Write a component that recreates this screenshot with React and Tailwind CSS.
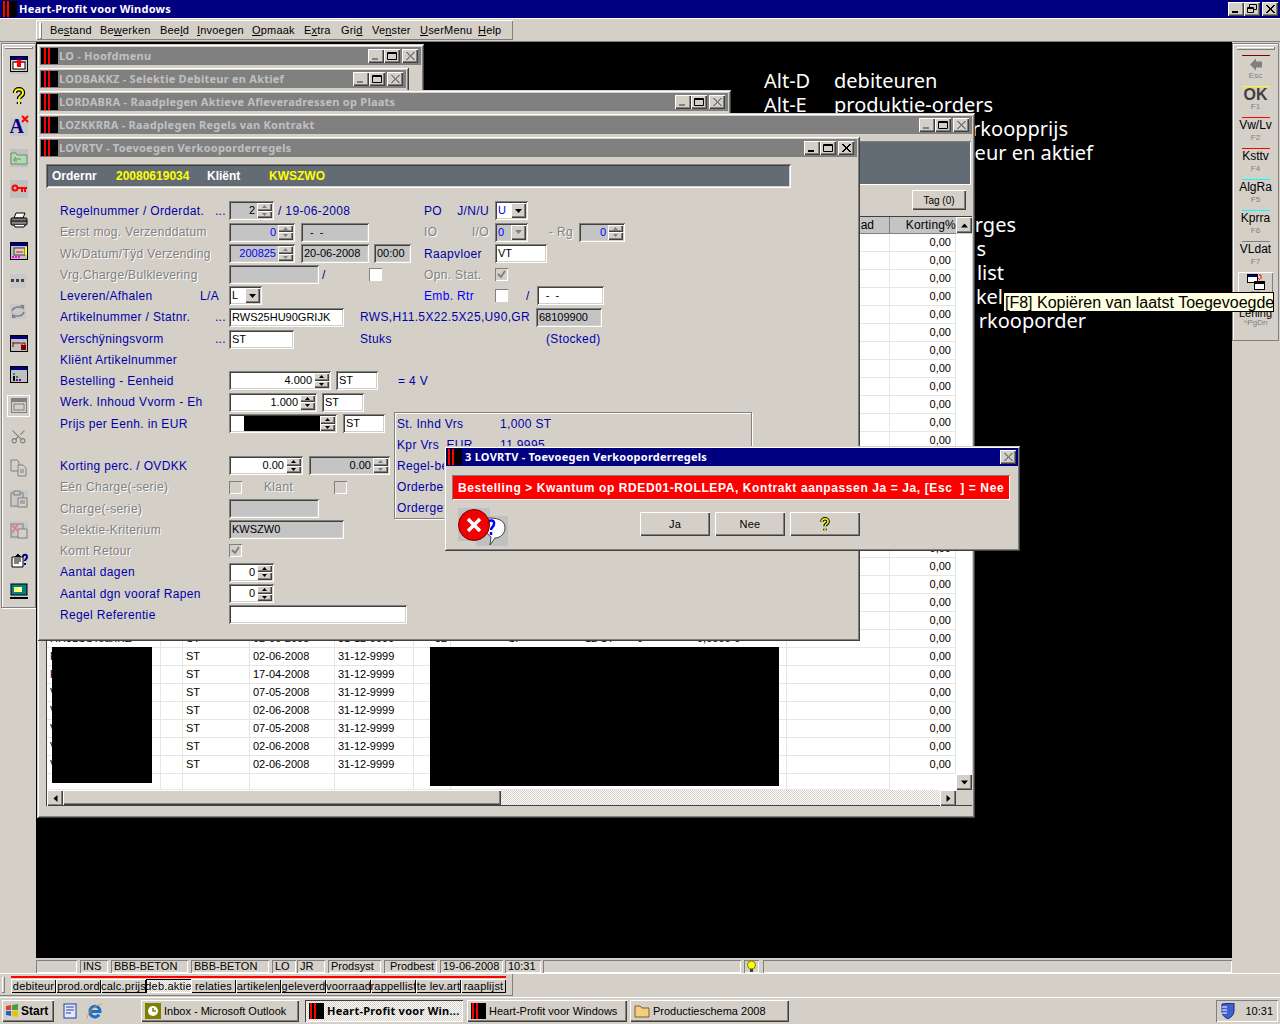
import { Scissors } from "lucide-react";
import clsx from "clsx";

const RAISED = "shadow-[inset_1px_1px_0_#fff,inset_-1px_-1px_0_#404040,inset_-2px_-2px_0_#808080]";
const SUNKEN = "shadow-[inset_1px_1px_0_#808080,inset_-1px_-1px_0_#fff,inset_2px_2px_0_#404040,inset_-2px_-2px_0_#d4d0c8]";
const THIN_IN = "shadow-[inset_1px_1px_0_#808080,inset_-1px_-1px_0_#fff]";
const WINDOW = "shadow-[inset_1px_1px_0_#d4d0c8,inset_-1px_-1px_0_#404040,inset_2px_2px_0_#fff,inset_-2px_-2px_0_#808080]";
const TITLE_FONT = "font-['Noto_Sans',sans-serif] font-bold tracking-[0.25px]";

function AppIcon({ small }) {
  return (
    <div className={clsx("flex shrink-0 gap-[2px] bg-black", small ? "h-[16px] w-[15px] pl-[1px]" : "h-[16px] w-[17px] pl-[3px]")}>
      <div className="h-full w-[2px] bg-[#ff0000]" />
      <div className="h-full w-[2px] bg-[#ff0000]" />
    </div>
  );
}

function CtlButton({ kind, disabled }) {
  const color = disabled ? "#808080" : "#000";
  return (
    <div className={clsx("flex h-[14px] w-[16px] shrink-0 items-center justify-center bg-[#d4d0c8]", RAISED)}>
      <svg width="12" height="10" viewBox="0 0 12 10">
        {kind === "min" && <rect x="2" y="7" width="6" height="2" fill={color} />}
        {kind === "max" && <path d="M1.5 1.5h9v7h-9zM1.5 2.5h9" stroke="#000" fill="none" />}
        {kind === "restore" && <path d="M3.5 3V.5h7v5H8M1.5 3.5h6v5h-6zM1.5 4.5h6" stroke="#000" fill="none" />}
        {kind === "close" && <path d="M2 1l8 8M3 1l8 8M10 1l-8 8M11 1l-8 8" stroke={color} />}
      </svg>
    </div>
  );
}

function MdiWindow({ title, className, closeActive, children }) {
  return (
    <div className={clsx("absolute flex flex-col bg-[#d4d0c8] p-[3px]", WINDOW, className)}>
      <div className="flex h-[18px] shrink-0 items-center bg-[#808080] pl-[1px] pr-[3px]">
        <AppIcon />
        <span className={clsx(TITLE_FONT, "ml-[1px] flex-1 whitespace-nowrap text-[11px] text-[#c0c0c0]")}>{title}</span>
        <CtlButton kind="min" disabled={!closeActive} />
        <CtlButton kind="max" />
        <div className="w-[2px]" />
        <CtlButton kind="close" disabled={!closeActive} />
      </div>
      {children}
    </div>
  );
}

function Lbl({ children, off, bright, className }) {
  return (
    <span
      className={clsx(
        "whitespace-nowrap text-[12px] tracking-[0.35px]",
        off ? "text-[#808080] [text-shadow:1px_1px_0_#fff]" : bright ? "text-[#0000ff]" : "text-[#0000a8]",
        className,
      )}
    >
      {children}
    </span>
  );
}

function Cap({ children, off, extra, right = "pr-[3px]" }) {
  return (
    <div className={clsx("flex w-[169px] shrink-0 items-center justify-between", right)}>
      <Lbl off={off}>{children}</Lbl>
      {extra && <Lbl>{extra}</Lbl>}
    </div>
  );
}

function Field({ w, off, children, className }) {
  return (
    <div
      className={clsx(
        "flex h-[19px] shrink-0 items-center overflow-hidden whitespace-nowrap pl-[3px] text-[11px] text-black",
        SUNKEN,
        off ? "bg-[#c4c4c4]" : "bg-white",
        w,
        className,
      )}
    >
      {children}
    </div>
  );
}

function Spin({ w, off, value, blue, className, block }) {
  const c = off ? "#808080" : "#000";
  return (
    <div className={clsx("relative flex h-[19px] shrink-0 items-center justify-end p-[2px] text-[11px]", SUNKEN, off ? "bg-[#c4c4c4]" : "bg-white", w, className)}>
      {block && <div className="absolute left-[15px] top-[2px] h-[15px] w-[76px] bg-black" />}
      <span className={clsx("pr-[2px]", blue ? "text-[#0000ff]" : "text-black")}>{value}</span>
      <div className="flex w-[15px] shrink-0 flex-col">
        {[0, 1].map((d) => (
          <div key={d} className={clsx("flex h-[7.5px] items-center justify-center bg-[#d4d0c8]", RAISED)}>
            <svg width="5" height="3" viewBox="0 0 5 3">
              <path d={d ? "M0 0h5L2.5 3z" : "M0 3h5L2.5 0z"} fill={c} />
            </svg>
          </div>
        ))}
      </div>
    </div>
  );
}

function Combo({ value, off }) {
  return (
    <div className={clsx("flex h-[19px] w-[33px] shrink-0 items-center justify-between p-[2px] pl-[3px] text-[11px]", SUNKEN, off ? "bg-[#c4c4c4]" : "bg-white")}>
      <span className={off || value === "U" ? "text-[#0000ff]" : "text-black"}>{value}</span>
      <div className={clsx("flex h-[15px] w-[15px] items-center justify-center bg-[#d4d0c8]", RAISED)}>
        <svg width="7" height="4" viewBox="0 0 7 4">
          <path d="M0 0h7L3.5 4z" fill={off ? "#808080" : "#000"} />
        </svg>
      </div>
    </div>
  );
}

function Check({ checked, off, className }) {
  return (
    <div className={clsx("flex h-[13px] w-[13px] shrink-0 items-center justify-center", THIN_IN, off ? "bg-[#d4d0c8]" : "bg-white", className)}>
      {checked && (
        <svg width="9" height="9" viewBox="0 0 9 9">
          <path d="M1 4l3 3 4-6" stroke="#808080" strokeWidth="2" fill="none" />
        </svg>
      )}
    </div>
  );
}

function FormRow({ h = "h-[21px]", children, className }) {
  return <div className={clsx("flex items-center", h, className)}>{children}</div>;
}

function Split({ left, right, h }) {
  return (
    <FormRow h={h}>
      <div className="flex w-[364px] shrink-0 items-center">{left}</div>
      <div className="flex items-center">{right}</div>
    </FormRow>
  );
}

function RightCap({ children, off, bright, second, secondOff }) {
  return (
    <div className="flex w-[71px] shrink-0 items-center justify-between pr-[10px]">
      <Lbl off={off} bright={bright}>{children}</Lbl>
      {second && <Lbl off={secondOff} className="-mr-[4px]">{second}</Lbl>}
    </div>
  );
}

function OrderForm() {
  return (
    <div className="flex flex-col pl-[20px] pt-[12px]">
      <Split
        left={
          <>
            <Cap extra="...">Regelnummer / Orderdat.</Cap>
            <Spin w="w-[45px]" off value="2" />
            <Lbl className="ml-[4px]">/ 19-06-2008</Lbl>
          </>
        }
        right={
          <>
            <RightCap second="J/N/U">PO</RightCap>
            <Combo value="U" />
          </>
        }
      />
      <Split
        h="h-[22px]"
        left={
          <>
            <Cap off>Eerst mog. Verzenddatum</Cap>
            <Spin w="w-[66px]" off blue value="0" />
            <Field off w="w-[68px]" className="ml-[6px] pl-[9px] text-[#0000a8]">-&nbsp;&nbsp;-</Field>
          </>
        }
        right={
          <>
            <RightCap off second="I/O" secondOff>IO</RightCap>
            <Combo value="0" off />
            <Lbl off className="ml-[21px]">- Rg</Lbl>
            <Spin w="w-[46px]" off blue value="0" className="ml-[6px]" />
          </>
        }
      />
      <Split
        left={
          <>
            <Cap off>Wk/Datum/Tÿd Verzending</Cap>
            <Spin w="w-[66px]" off blue value="200825" />
            <Field off w="w-[68px]" className="ml-[6px] text-[#0000ff]">20-06-2008</Field>
            <Field off w="w-[37px]" className="ml-[5px] text-[#0000ff]">00:00</Field>
          </>
        }
        right={
          <>
            <RightCap>Raapvloer</RightCap>
            <Field w="w-[52px]">VT</Field>
          </>
        }
      />
      <Split
        left={
          <>
            <Cap off>Vrg.Charge/Bulklevering</Cap>
            <Field off w="w-[90px]" />
            <Lbl className="ml-[3px]">/</Lbl>
            <Check className="ml-[43px]" />
          </>
        }
        right={
          <>
            <RightCap off>Opn. Stat.</RightCap>
            <Check checked off />
          </>
        }
      />
      <Split
        left={
          <>
            <Cap extra="L/A" right="pr-[10px]">Leveren/Afhalen</Cap>
            <Combo value="L" />
          </>
        }
        right={
          <>
            <RightCap bright>Emb. Rtr</RightCap>
            <Check />
            <Lbl className="ml-[18px]">/</Lbl>
            <Field w="w-[67px]" className="ml-[7px] pl-[9px]">-&nbsp;&nbsp;-</Field>
          </>
        }
      />
      <FormRow h="h-[22px]">
        <Cap extra="...">Artikelnummer / Statnr.</Cap>
        <Field w="w-[115px]">RWS25HU90GRIJK</Field>
        <Lbl className="ml-[16px] w-[176px]">RWS,H11.5X22.5X25,U90,GR</Lbl>
        <Field off w="w-[66px]">68109900</Field>
      </FormRow>
      <FormRow h="h-[22px]">
        <Cap extra="...">Verschÿningsvorm</Cap>
        <Field w="w-[65px]">ST</Field>
        <Lbl className="ml-[66px] w-[186px]">Stuks</Lbl>
        <Lbl>(Stocked)</Lbl>
      </FormRow>
      <FormRow h="h-[20px]">
        <Cap>Kliënt Artikelnummer</Cap>
      </FormRow>
      <FormRow>
        <Cap>Bestelling - Eenheid</Cap>
        <Spin w="w-[102px]" value="4.000" />
        <Field w="w-[42px]" className="ml-[5px]">ST</Field>
        <Lbl className="ml-[20px]">= 4 V</Lbl>
      </FormRow>
      <FormRow h="h-[22px]">
        <Cap>Werk. Inhoud Vvorm - Eh</Cap>
        <Spin w="w-[88px]" value="1.000" />
        <Field w="w-[42px]" className="ml-[5px]">ST</Field>
      </FormRow>
      <div className="flex">
        <div className="flex w-[334px] shrink-0 flex-col">
          <FormRow>
            <Cap>Prijs per Eenh. in EUR</Cap>
            <Spin w="w-[108px]" value="" block />
            <Field w="w-[42px]" className="ml-[6px]">ST</Field>
          </FormRow>
          <div className="h-[21px]" />
          <FormRow>
            <Cap>Korting perc. / OVDKK</Cap>
            <Spin w="w-[74px]" value="0.00" />
            <Spin w="w-[81px]" off value="0.00" className="ml-[6px]" />
          </FormRow>
          <FormRow h="h-[22px]">
            <Cap off>Eén Charge(-serie)</Cap>
            <Check off />
            <Lbl off className="ml-[22px] w-[70px]">Klant</Lbl>
            <Check off />
          </FormRow>
          <FormRow>
            <Cap off>Charge(-serie)</Cap>
            <Field off w="w-[90px]" />
          </FormRow>
          <FormRow>
            <Cap off>Selektie-Kriterium</Cap>
            <Field off w="w-[115px]" className="text-[#0000ff]">KWSZW0</Field>
          </FormRow>
          <FormRow>
            <Cap off>Komt Retour</Cap>
            <Check checked off />
          </FormRow>
          <FormRow h="h-[22px]">
            <Cap>Aantal dagen</Cap>
            <Spin w="w-[45px]" value="0" />
          </FormRow>
          <FormRow>
            <Cap>Aantal dgn vooraf Rapen</Cap>
            <Spin w="w-[45px]" value="0" />
          </FormRow>
          <FormRow>
            <Cap>Regel Referentie</Cap>
            <Field w="w-[178px]" />
          </FormRow>
        </div>
        <div className="mt-[-1px] flex h-[107px] w-[358px] flex-col border border-[#808080] pl-[2px] pt-[1px] shadow-[1px_1px_0_#fff,inset_1px_1px_0_#fff]">
          {[
            ["St. Inhd Vrs", "1,000 ST"],
            ["Kpr Vrs  EUR", "11,9995"],
            ["Regel-bedrag", ""],
            ["Orderbedrag", ""],
            ["Ordergewicht", ""],
          ].map(([a, b]) => (
            <div key={a} className="flex h-[21px] items-center">
              <Lbl className="w-[103px] whitespace-pre">{a}</Lbl>
              <Lbl>{b}</Lbl>
            </div>
          ))}
        </div>
      </div>
    </div>
  );
}

const GRID = "grid grid-cols-[114px_22px_67px_85px_79px_37px_336px_103px_66px]";

const DATA_ROWS = {
  23: ["F", "02-06-2008"],
  24: ["F", "17-04-2008"],
  25: ["V", "07-05-2008"],
  26: ["V", "02-06-2008"],
  27: ["V", "07-05-2008"],
  28: ["V", "02-06-2008"],
  29: ["V", "02-06-2008"],
};

function ContractTable() {
  const rows = Array.from({ length: 30 }, (_, i) => i);
  return (
    <div className="relative ml-[6px] mt-[6px] flex w-[926px] flex-col border-l border-t border-[#404040] text-[11px] text-black">
      <div className="flex">
        <div className={clsx(GRID, "h-[17px] bg-[#c4c4c4]")}>
          {["", "", "", "", "", "", ""].map((t, i) => (
            <div key={i} className="border-r border-b border-[#808080]" />
          ))}
          <div className="border-r border-b border-[#808080] pr-[15px] text-right text-[12px] leading-[16px]">ad</div>
          <div className="border-b border-[#808080] text-right text-[12px] leading-[16px] tracking-[0.2px]">Korting%</div>
        </div>
        <ScrollBtn dir="up" />
      </div>
      <div className="flex">
        <div className="flex w-[909px] flex-col bg-white">
          {rows.map((i) => {
            const d = DATA_ROWS[i];
            return (
              <div key={i} className={clsx(GRID, "h-[18px] shrink-0 leading-[17px]")}>
                <Cell className="pl-[3px]">{i === 22 ? "HH3LSSToarIKE" : d?.[0]}</Cell>
                <Cell />
                <Cell className="pl-[3px]">{d || i === 22 ? "ST" : ""}</Cell>
                <Cell className="pl-[3px]">{i === 22 ? "02-06-2008" : d?.[1]}</Cell>
                <Cell className="pl-[3px]">{d || i === 22 ? "31-12-9999" : ""}</Cell>
                <Cell className="pl-[21px]">{i === 22 ? "32" : ""}</Cell>
                <Cell className="flex">
                  {i === 22 && (
                    <>
                      <span className="ml-[57px] w-[77px]">SI</span>
                      <span className="w-[15px]">12</span>
                      <span className="w-[37px]">ST</span>
                      <span className="w-[60px]">0</span>
                      <span>0,0000-0</span>
                    </>
                  )}
                </Cell>
                <Cell />
                <Cell className="pr-[4px] text-right">0,00</Cell>
              </div>
            );
          })}
          <div className={clsx(GRID, "h-[16px]")}>
            {[0, 1, 2, 3, 4, 5, 6, 7].map((i) => <Cell key={i} />)}
            <div />
          </div>
        </div>
        <div className="flex w-[16px] flex-col justify-end bg-white">
          <ScrollBtn dir="down" />
        </div>
      </div>
      <div className="flex h-[16px] border-b border-[#404040]">
        <ScrollBtn dir="left" />
        <div className={clsx("h-[15px] w-[438px] bg-[#d4d0c8]", RAISED)} />
        <div className="w-[439px] bg-[repeating-conic-gradient(#d4d0c8_0_25%,#fff_0_50%)] bg-[length:2px_2px]" />
        <ScrollBtn dir="right" />
      </div>
      <div className="absolute left-[5px] top-[430px] h-[136px] w-[100px] bg-black" />
      <div className="absolute left-[383px] top-[430px] h-[139px] w-[349px] bg-black" />
    </div>
  );
}

function Cell({ children, className }) {
  return <div className={clsx("overflow-hidden whitespace-nowrap border-b border-r border-[#e6e6e6]", className)}>{children}</div>;
}

function ScrollBtn({ dir }) {
  const d = { up: "M0 4h7L3.5 0z", down: "M0 0h7L3.5 4z", left: "M4 0v7L0 3.5z", right: "M0 0v7l4-3.5z" }[dir];
  return (
    <div className={clsx("flex h-[16px] w-[16px] shrink-0 items-center justify-center bg-[#d4d0c8]", RAISED)}>
      <svg width="7" height="7" viewBox="0 0 7 7">
        <path d={d} fill="#000" transform={dir === "up" || dir === "down" ? "translate(0 1.5)" : "translate(1.5 0)"} />
      </svg>
    </div>
  );
}

function QuestionMark({ size = 18 }) {
  return (
    <svg width={size} height={size} viewBox="0 0 18 18">
      <path d="M5 6c0-5 8-5 8 0 0 3-4 3-4 6M9 15v2" stroke="#000" strokeWidth="4.5" fill="none" />
      <path d="M5 6c0-5 8-5 8 0 0 3-4 3-4 6M9 15v2" stroke="#ffff00" strokeWidth="2" fill="none" />
    </svg>
  );
}

const LEFT_TOOLS = [
  <svg key="1" width="18" height="18" viewBox="0 0 18 18"><rect width="18" height="18" fill="#c0c0c0" /><rect x=".5" y=".5" width="17" height="15" fill="#d4d0c8" stroke="#000" /><rect x="1" y="1" width="16" height="3" fill="#000080" /><rect x="3" y="6" width="12" height="7" fill="#fff" stroke="#000" /><path d="M9 3l5 4h-3v4H7V7H4z" fill="#ff0000" /></svg>,
  <QuestionMark key="2" />,
  <div key="3" className="relative h-[18px] w-[18px] bg-[#c8c8c8]">
    <span className="absolute left-0 top-[-3px] font-['Liberation_Serif',serif] text-[20px] font-bold leading-[22px] text-[#000080]">A</span>
    <svg className="absolute right-[-1px] top-[-3px]" width="8" height="8" viewBox="0 0 8 8"><path d="M1 1l6 6M7 1L1 7" stroke="#ff0000" strokeWidth="2" /></svg>
  </div>,
  <svg key="4" width="18" height="18" viewBox="0 0 18 18"><rect width="18" height="18" fill="#c0c0c0" /><path d="M1 15V4h5l1 2h10v9z" fill="#a8e0a8" stroke="#808080" /><path d="M6 8L4 10h7M4 10v2h3" stroke="#808080" fill="none" /></svg>,
  <svg key="5" width="18" height="18" viewBox="0 0 18 18"><rect width="18" height="18" fill="#c0c0c0" /><circle cx="5" cy="8" r="2.5" fill="none" stroke="#ff0000" strokeWidth="2" /><path d="M8 7h9v2h-1v3h-2V9h-1v3h-2V9H8z" fill="#ff0000" /></svg>,
  <svg key="6" width="18" height="18" viewBox="0 0 18 18"><path d="M4 7l2-5h9l-2 5z" fill="#fff" stroke="#000" /><rect x="1" y="7" width="16" height="7" rx="1" fill="#808080" stroke="#000" /><path d="M1 10h16M4 14l1 2h9l1-2" stroke="#000" fill="#fff" /></svg>,
  <svg key="7" width="18" height="18" viewBox="0 0 18 18"><rect x=".5" y=".5" width="17" height="17" fill="#c0c0c0" stroke="#000" /><rect x="1" y="1" width="16" height="3" fill="#000080" /><rect x="4" y="6" width="11" height="7" fill="#d4d0c8" stroke="#404040" /><path d="M6 10h7" stroke="#ff0000" /><path d="M2 15h2M5 15h2M8 15h2" stroke="#ff00ff" strokeWidth="2" /><path d="M16 5v8" stroke="#ffff00" strokeWidth="2" /></svg>,
  <svg key="8" width="18" height="18" viewBox="0 0 18 18"><rect y="1" width="16" height="14" fill="#c8c8c8" /><rect x="1" y="6" width="3" height="3" fill="#404040" /><rect x="6" y="6" width="3" height="3" fill="#404040" /><rect x="11" y="6" width="3" height="3" fill="#404040" /></svg>,
  <svg key="9" width="18" height="18" viewBox="0 0 18 18"><rect width="16" height="15" fill="#c8c8c8" /><path d="M2 7c1-4 7-5 10-3M14 8c-1 4-7 5-10 3" stroke="#808080" strokeWidth="1.5" fill="none" /><path d="M10 1h4v5zM6 14H2V9z" fill="#808080" /></svg>,
  <svg key="10" width="18" height="18" viewBox="0 0 18 18"><rect x=".5" y=".5" width="17" height="16" fill="#c0c0c0" stroke="#000" /><rect x="1" y="1" width="16" height="3" fill="#000080" /><path d="M3 7v5M3 8h8" stroke="#800000" /><path d="M11 10h5v5h-5z" fill="#800000" /><path d="M12 10V8h3v2" stroke="#800000" fill="none" /></svg>,
  <svg key="11" width="18" height="18" viewBox="0 0 18 18"><rect x=".5" y=".5" width="17" height="16" fill="#c0c0c0" stroke="#000" /><rect x="1" y="1" width="16" height="3" fill="#000080" /><path d="M4 7v2" stroke="#00a0a0" strokeWidth="2" /><path d="M4 10v5" stroke="#000" strokeWidth="2" /><path d="M7 10v2" stroke="#00a000" strokeWidth="2" /><path d="M7 13v2M10 13v2" stroke="#800080" strokeWidth="2" /></svg>,
  <div key="12" className="flex h-[22px] w-[23px] items-center justify-center bg-[#d4d0c8] shadow-[inset_1px_1px_0_#fff,inset_-1px_-1px_0_#fff]">
    <svg width="16" height="15" viewBox="0 0 16 15"><rect x=".5" y=".5" width="15" height="14" fill="#d4d0c8" stroke="#808080" /><rect x="1" y="1" width="14" height="3" fill="#808080" /><rect x="3" y="6" width="10" height="6" fill="none" stroke="#808080" /></svg>
  </div>,
  <Scissors key="13" size={17} color="#808080" strokeWidth={1.5} className="rotate-[-90deg]" />,
  <svg key="14" width="18" height="18" viewBox="0 0 18 18"><path d="M1 1h6l2 2v9H1z" fill="#d4d0c8" stroke="#808080" /><path d="M8 6h5l3 3v8H8z" fill="#d4d0c8" stroke="#808080" /><path d="M10 11h4M10 13h4" stroke="#808080" /></svg>,
  <svg key="15" width="18" height="18" viewBox="0 0 18 18"><rect width="18" height="18" fill="#c8c8c8" /><rect x="1" y="3" width="12" height="13" fill="none" stroke="#808080" /><rect x="4" y="1" width="6" height="4" fill="#c8c8c8" stroke="#808080" /><path d="M8 8h9v9H8z" fill="#d4d0c8" stroke="#808080" /><path d="M10 11h5M10 13h5" stroke="#808080" /></svg>,
  <svg key="16" width="18" height="18" viewBox="0 0 18 18"><rect width="18" height="18" fill="#c8c8c8" /><rect x="1" y="3" width="12" height="13" fill="none" stroke="#808080" /><path d="M8 8h9v9H8z" fill="#d4d0c8" stroke="#808080" /><path d="M2 4l6 6M8 3l-6 9" stroke="#e08080" strokeWidth="2" /></svg>,
  <svg key="17" width="18" height="18" viewBox="0 0 18 18"><path d="M2 5h11v10H2z" fill="#fff" stroke="#000" /><path d="M4 7h7M4 9h7M4 11h5M5 5l3-3 3 3" stroke="#000" /><path d="M13 5c0-3 4-3 4 0 0 2-2 2-2 4M15 11v2" stroke="#000080" strokeWidth="2" fill="none" /></svg>,
  <svg key="18" width="18" height="18" viewBox="0 0 18 18"><rect width="18" height="16" fill="#c8c8c8" /><rect x="1" y="1" width="16" height="11" fill="#008080" stroke="#000" /><rect x="4" y="4" width="8" height="5" fill="#ffff80" /><path d="M0 15h18" stroke="#000" strokeWidth="2" /></svg>,
];

const RIGHT_TOOLS = [
  ["bg-[#800000]", null, "Esc"],
  ["bg-[#ffff00]", "OK", "F1"],
  ["bg-[#ff0000]", "Vw/Lv", "F2"],
  ["bg-[#ff0000]", "Ksttv", "F4"],
  ["bg-[#00ffff]", "AlgRa", "F5"],
  ["bg-[#00ffff]", "Kprra", "F6"],
  ["bg-[#808080]", "VLdat", "F7"],
];

function LeftToolbar() {
  return (
    <div className={clsx("ml-[1px] mt-[1px] flex h-[565px] w-[35px] flex-col items-center border border-[#808080] shadow-[inset_1px_1px_0_#fff,1px_1px_0_#fff]")}>
      <div className="mt-[3px] h-[3px] w-[28px] border-b border-r border-[#808080] bg-[#d4d0c8] shadow-[inset_1px_1px_0_#fff]" />
      {LEFT_TOOLS.map((icon, i) => (
        <div key={i} className="flex h-[31px] w-full shrink-0 items-center justify-center">{icon}</div>
      ))}
    </div>
  );
}

function RightToolbar() {
  return (
    <div className="mt-[1px] flex h-[298px] w-[47px] flex-col items-center border border-[#808080] shadow-[inset_1px_1px_0_#fff]">
      <div className="mb-[5px] mt-[3px] h-[3px] w-[38px] border-b border-r border-[#808080] shadow-[inset_1px_1px_0_#fff]" />
      {RIGHT_TOOLS.map(([line, label, key]) => (
        <div key={key} className="flex h-[31px] w-full shrink-0 flex-col items-center">
          <div className={clsx("h-px w-[28px]", line)} />
          {label === "OK" ? (
            <span className="h-[16px] text-[16px] font-bold leading-[16px] text-[#404040]">OK</span>
          ) : label ? (
            <span className="h-[16px] text-[12px] leading-[14px] text-black">{label}</span>
          ) : (
            <svg className="mt-[1px] h-[15px]" width="14" height="14" viewBox="0 0 14 14"><path d="M1 7l6-6v3h6v6H7v3z" fill="#808080" /></svg>
          )}
          <span className="text-[8px] leading-[8px] text-[#808080]">{key}</span>
        </div>
      ))}
      <div className={clsx("flex h-[26px] w-[35px] shrink-0 flex-col items-center bg-[#d4d0c8] pt-[2px]", "shadow-[inset_1px_1px_0_#fff,inset_-1px_-1px_0_#808080]")}>
        <svg width="18" height="16" viewBox="0 0 18 16">
          <rect x=".5" y=".5" width="10" height="8" fill="#fff" stroke="#000" />
          <rect x="1" y="1" width="9" height="2" fill="#000080" />
          <rect x="7.5" y="7.5" width="10" height="8" fill="#fff" stroke="#000" />
          <rect x="8" y="8" width="9" height="2" fill="#000" />
          <path d="M12 1h2v4M13 6l-2-2" stroke="#ff0000" fill="none" />
        </svg>
        <span className="text-[8px] leading-[8px] text-[#808080]">F8</span>
      </div>
      <span className="mt-[10px] text-[11px] leading-[11px] text-black">Lening</span>
      <span className="text-[8px] leading-[8px] text-[#808080]">^PgDn</span>
    </div>
  );
}

const MENU = [
  ["w-[50px]", "Be", "s", "tand"],
  ["w-[60px]", "Be", "w", "erken"],
  ["w-[37px]", "Bee", "l", "d"],
  ["w-[55px]", "", "I", "nvoegen"],
  ["w-[52px]", "", "O", "pmaak"],
  ["w-[37px]", "E", "x", "tra"],
  ["w-[31px]", "Gri", "d", ""],
  ["w-[48px]", "Ve", "n", "ster"],
  ["w-[58px]", "", "U", "serMenu"],
  ["w-[30px]", "", "H", "elp"],
];

const SHORTCUTS = ["debiteur", "prod.ord", "calc.prijs", "deb.aktie", "relaties", "artikelen", "geleverd", "voorraad", "rappellist", "te lev.art", "raaplijst"];

const STATUS = [
  ["w-[41px]", ""],
  ["w-[28px] ml-[3px]", "INS"],
  ["w-[77px] ml-[3px]", "BBB-BETON"],
  ["w-[78px] ml-[3px]", "BBB-BETON"],
  ["w-[24px] ml-[3px]", "LO"],
  ["w-[28px] ml-[1px]", "JR"],
  ["w-[53px] ml-[3px]", "Prodsyst"],
  ["w-[53px] ml-[3px] text-center", "Prodbest"],
  ["w-[63px] ml-[3px]", "19-06-2008"],
  ["w-[36px] ml-[2px]", "10:31"],
  ["w-[198px] ml-[2px]", ""],
];

// right ends of the lines that stick out behind the open windows
const NOTES = [
  ["w-[93px]", "rkoopprijs"],
  ["w-[118px]", "eur en aktief"],
  ["w-[118px]", ""],
  ["w-[118px]", ""],
  ["w-[41px]", "rges"],
  ["w-[11px]", "s"],
  ["w-[29px]", "list"],
  ["w-[28px]", "kel"],
  ["w-[111px]", "rkooporder"],
];

function Desktop() {
  return (
    <div className="relative h-[916px] w-[1196px] shrink-0 bg-black">
      <div className="absolute left-[728px] top-[27px] whitespace-nowrap font-['Noto_Sans',sans-serif] text-[20px] leading-[24px] text-white">
        <div className="flex h-[24px]"><span className="w-[70px]">Alt-D</span>debiteuren</div>
        <div className="flex h-[24px]"><span className="w-[70px]">Alt-E</span>produktie-orders</div>
        {NOTES.map(([w, t], i) => (
          <div key={i} className={clsx("ml-[211px] flex h-[24px] justify-end", w)}>{t}</div>
        ))}
      </div>

      <MdiWindow title="LO - Hoofdmenu" className="left-[1px] top-[2px] h-[70px] w-[387px]" />
      <MdiWindow title="LODBAKKZ - Selektie Debiteur en Aktief" className="left-[1px] top-[25px] h-[40px] w-[372px]" />
      <MdiWindow title="LORDABRA - Raadplegen Aktieve Afleveradressen op Plaats" className="left-[1px] top-[48px] h-[60px] w-[694px]" />

      <MdiWindow title="LOZKKRRA - Raadplegen Regels van Kontrakt" className="left-[1px] top-[71px] h-[705px] w-[938px]">
        <div className={clsx("ml-[6px] mt-[7px] h-[44px] w-[925px] shrink-0 bg-[#636c74]", THIN_IN)} />
        <div className="mt-[5px] flex justify-end pr-[6px]">
          <div className={clsx("flex h-[20px] w-[54px] items-center justify-center text-[10px]", RAISED)}>Tag (0)</div>
        </div>
        <ContractTable />
      </MdiWindow>

      <MdiWindow title="LOVRTV - Toevoegen Verkooporderregels" closeActive className="left-[1px] top-[94px] h-[505px] w-[823px]">
        <div className={clsx("ml-[6px] mt-[7px] flex h-[24px] w-[745px] shrink-0 items-center bg-[#636c74] text-[12px] font-bold", SUNKEN)}>
          <span className="ml-[6px] w-[64px] text-white">Ordernr</span>
          <span className="w-[91px] text-[#ffff00]">20080619034</span>
          <span className="w-[62px] text-white">Kliënt</span>
          <span className="text-[#ffff00]">KWSZWO</span>
        </div>
        <OrderForm />
      </MdiWindow>

      <div className={clsx("absolute left-[408px] top-[404px] flex h-[105px] w-[576px] flex-col bg-[#d4d0c8] p-[2px]", WINDOW)}>
        <div className="flex h-[18px] shrink-0 items-center bg-[#000080] pl-[1px] pr-[2px]">
          <AppIcon small />
          <span className={clsx(TITLE_FONT, "ml-[3px] flex-1 whitespace-nowrap text-[11px] text-white")}>3 LOVRTV - Toevoegen Verkooporderregels</span>
          <CtlButton kind="close" disabled />
        </div>
        <div className={clsx("ml-[6px] mr-[8px] mt-[9px] flex h-[25px] items-center whitespace-pre bg-[#ff0000] pl-[6px] text-[12px] font-bold tracking-[0.6px] text-white", THIN_IN)}>
          Bestelling &gt; Kwantum op RDED01-ROLLEPA, Kontrakt aanpassen Ja = Ja, [Esc  ] = Nee
        </div>
        <div className="flex items-start">
          <svg className="ml-[12px] mt-[8px]" width="50" height="38" viewBox="0 0 50 38">
            <rect x="0" y="0" width="32" height="33" fill="#c0c0c0" />
            <rect x="18" y="8" width="32" height="30" fill="#c0c0c0" />
            <path d="M31 10c12 0 16 4 16 10s-5 10-10 10l-5 7 1-8c-3-2-5-5-5-9 0-6 0-10 3-10z" fill="#fff" stroke="#404040" />
            <path d="M30 15c1-4 7-3 6 1 0 3-3 3-3 6M33 24v3" stroke="#0000ff" strokeWidth="2.5" fill="none" />
            <circle cx="16" cy="17" r="15.5" fill="#f00000" stroke="#800000" />
            <path d="M10 11l12 12M22 11L10 23" stroke="#fff" strokeWidth="3.5" />
          </svg>
          <div className="ml-[132px] mt-[12px] flex gap-[5px]">
            {["Ja", "Nee", null].map((t) => (
              <div key={t} className={clsx("flex h-[24px] w-[70px] items-center justify-center text-[11px] tracking-[0.3px]", RAISED)}>
                {t || <QuestionMark size={14} />}
              </div>
            ))}
          </div>
        </div>
      </div>

      <div className="absolute left-[967px] top-[250px] z-10 h-[20px] w-[271px] whitespace-nowrap border border-black bg-[#ffffe1] pl-[1px] text-[16px] leading-[19px] text-black">
        [F8] Kopiëren van laatst Toegevoegde
      </div>
    </div>
  );
}

function TaskButton({ w, active, children }) {
  return (
    <div className={clsx("flex h-[22px] items-center gap-[3px] whitespace-nowrap pl-[4px] text-[11px]", w, active ? "bg-[repeating-conic-gradient(#d4d0c8_0_25%,#fff_0_50%)] bg-[length:2px_2px] font-bold shadow-[inset_1px_1px_0_#404040,inset_-1px_-1px_0_#fff]" : RAISED)}>
      {children}
    </div>
  );
}

export default function App() {
  return (
    <div className="flex h-[1024px] w-[1280px] flex-col overflow-hidden bg-[#d4d0c8] font-['Liberation_Sans',sans-serif] text-black">
      <div className="flex h-[18px] shrink-0 items-center bg-[#000080] pl-[2px] pr-[2px]">
        <AppIcon small />
        <span className={clsx(TITLE_FONT, "ml-[2px] flex-1 text-[11px] text-white")}>Heart-Profit voor Windows</span>
        <CtlButton kind="min" />
        <CtlButton kind="restore" />
        <div className="w-[2px]" />
        <CtlButton kind="close" />
      </div>

      <div className="flex h-[24px] shrink-0 border-y border-t-white border-b-[#808080] py-[1px] pl-[36px]">
        <div className="flex w-[477px] items-center shadow-[inset_1px_1px_0_#fff,inset_-1px_-1px_0_#808080]">
          <div className="ml-[3px] mr-[9px] h-[16px] w-[2px] bg-[#fff] shadow-[1px_1px_0_#808080]" />
          {MENU.map(([w, a, u, b]) => (
            <span key={a + u + b} className={clsx(w, "mt-[1px] text-[11px] tracking-[0.2px]")}>
              {a}<u>{u}</u>{b}
            </span>
          ))}
        </div>
      </div>

      <div className="flex h-[916px] shrink-0">
        <div className="w-[36px] shrink-0"><LeftToolbar /></div>
        <Desktop />
        <div className="w-[48px] shrink-0"><RightToolbar /></div>
      </div>

      <div className="flex h-[15px] shrink-0 pl-[36px] pt-[2px] text-[11px] leading-[13px]">
        {STATUS.map(([w, t], i) => (
          <div key={i} className={clsx("h-[13px] whitespace-nowrap pl-[3px]", THIN_IN, w)}>{t}</div>
        ))}
        <div className={clsx("ml-[3px] flex h-[13px] w-[15px] items-center justify-center", THIN_IN)}>
          <svg width="9" height="12" viewBox="0 0 9 12"><circle cx="4.5" cy="4" r="4" fill="#ffff00" stroke="#808000" /><rect x="3" y="8" width="3" height="3" fill="#404040" /></svg>
        </div>
        <div className={clsx("ml-[4px] h-[13px] w-[469px]", THIN_IN)} />
      </div>

      <div className="h-px shrink-0 bg-white" />

      <div className="flex h-[22px] w-[513px] shrink-0 items-center border-b border-r border-[#808080] pl-[2px]">
        <div className="h-[16px] w-[3px] border-b border-r border-[#808080] shadow-[inset_1px_1px_0_#fff]" />
        <div className="ml-[6px] flex flex-col">
          <div className="mb-[1px] h-[2px] w-[495px] bg-[#ff0000]" />
          <div className="flex">
            {SHORTCUTS.map((s) => (
              <div
                key={s}
                className={clsx(
                  "flex h-[14px] w-[45px] items-center justify-center overflow-hidden whitespace-nowrap text-[11px] tracking-[0.2px]",
                  s === "deb.aktie" ? "bg-[repeating-conic-gradient(#d4d0c8_0_25%,#fff_0_50%)] bg-[length:2px_2px] shadow-[inset_1px_1px_0_#000,inset_-1px_-1px_0_#fff]" : "bg-[#d4d0c8] shadow-[inset_1px_1px_0_#fff,inset_-1px_-1px_0_#000]",
                )}
              >
                {s}
              </div>
            ))}
          </div>
        </div>
      </div>

      <div className="mt-px flex h-[27px] shrink-0 items-center border-t border-white pl-[2px] pr-[2px]">
        <div className={clsx("flex h-[22px] w-[52px] items-center gap-[2px] pl-[3px] text-[12px] font-bold", RAISED)}>
          <svg width="14" height="14" viewBox="0 0 14 14">
            <path d="M1 2l5-1v5H1z" fill="#e04020" /><path d="M7 1l6-1v6H7z" fill="#40a040" /><path d="M1 7h5v5l-5-1z" fill="#2060d0" /><path d="M7 7h6v6l-6-1z" fill="#f0c000" />
          </svg>
          Start
        </div>
        <div className="ml-[8px] flex w-[79px] items-center gap-[8px]">
          <svg width="16" height="18" viewBox="0 0 16 18"><rect x="2" y="2" width="12" height="14" fill="#e8e8ff" stroke="#2040a0" /><path d="M4 5h8M4 8h8M4 11h5" stroke="#2040a0" /></svg>
          <svg width="18" height="18" viewBox="0 0 18 18"><path d="M4 9.5h10c0-7-10-7-10 0 0 6 7 7 9 3" fill="none" stroke="#1a70d0" strokeWidth="3" /><path d="M1 16C3 8 10 3 16 2" stroke="#e0a020" fill="none" /></svg>
        </div>
        <TaskButton w="w-[158px]">
          <svg width="16" height="16" viewBox="0 0 16 16"><rect width="16" height="16" fill="#808000" /><circle cx="8" cy="8" r="5" fill="#fff" /><path d="M8 5v3h3" stroke="#808000" strokeWidth="1.5" fill="none" /></svg>
          Inbox - Microsoft Outlook
        </TaskButton>
        <div className="w-[6px]" />
        <TaskButton w="w-[158px]" active><AppIcon small /><span className={TITLE_FONT}>Heart-Profit voor Win...</span></TaskButton>
        <div className="w-[4px]" />
        <TaskButton w="w-[160px]"><AppIcon small />Heart-Profit voor Windows</TaskButton>
        <div className="w-[3px]" />
        <TaskButton w="w-[159px]">
          <svg width="16" height="16" viewBox="0 0 16 16"><path d="M1 3h5l2 2h7v9H1z" fill="#f0d080" stroke="#806020" /></svg>
          Productieschema 2008
        </TaskButton>
        <div className="ml-auto flex h-[22px] w-[62px] items-center justify-between px-[5px] text-[11px] shadow-[inset_1px_1px_0_#808080,inset_-1px_-1px_0_#fff]">
          <svg width="14" height="16" viewBox="0 0 14 16"><path d="M1 1l12-1v8c0 4-3 6-6 8-4-2-6-4-6-8z" fill="#4060d0" stroke="#202080" /><path d="M1 4h5M1 7h5M1 10h5" stroke="#fff" /></svg>
          10:31
        </div>
      </div>
    </div>
  );
}
